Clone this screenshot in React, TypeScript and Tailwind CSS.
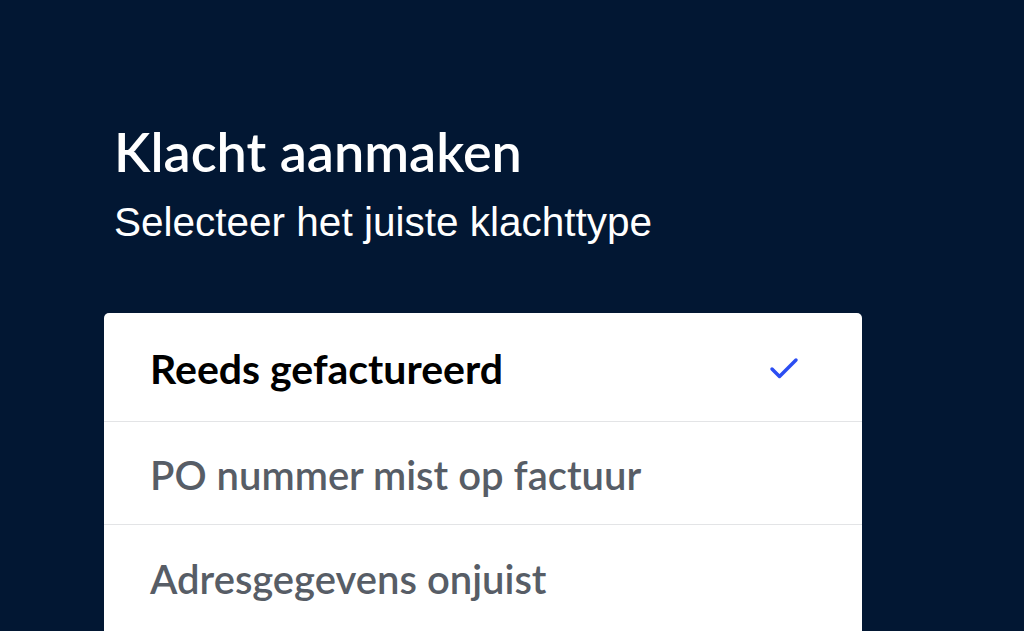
import { Check } from 'lucide-react'

const OPTIONS = [
  { label: 'Reeds gefactureerd', selected: true },
  { label: 'PO nummer mist op factuur', selected: false },
  { label: 'Adresgegevens onjuist', selected: false },
]

export default function App() {
  return (
    <div className="h-[631px] w-full overflow-hidden bg-[#021733] font-['Lato',sans-serif]">
      <div className="pl-[114px] pt-[124px]">
        <h1 className="text-[54px] font-semibold leading-[56px] text-white">Klacht aanmaken</h1>
        <p className="mt-[20px] font-['Liberation_Sans',sans-serif] text-[40.5px] leading-[44px] text-white">
          Selecteer het juiste klachttype
        </p>
      </div>

      <div className="ml-[104px] mt-[69px] w-[758px] rounded-[5px] bg-white pb-[40px]">
        {OPTIONS.map((o, i) => (
          <div
            key={o.label}
            className={`flex items-center justify-between pl-[46px] pr-[60px] pt-[4px] ${
              i === 0 ? 'h-[109px]' : 'h-[103px]'
            } ${i < OPTIONS.length - 1 ? 'border-b border-[#e3e4e6]' : ''}`}
          >
            <span
              className={`${
                o.selected ? 'text-[41px] font-bold text-black' : 'text-[40px] font-semibold text-[#575d66]'
              }`}
            >
              {o.label}
            </span>
            {o.selected && <Check className="h-[36px] w-[36px] text-[#2b4df2]" strokeWidth={2.3} />}
          </div>
        ))}
      </div>
    </div>
  )
}
